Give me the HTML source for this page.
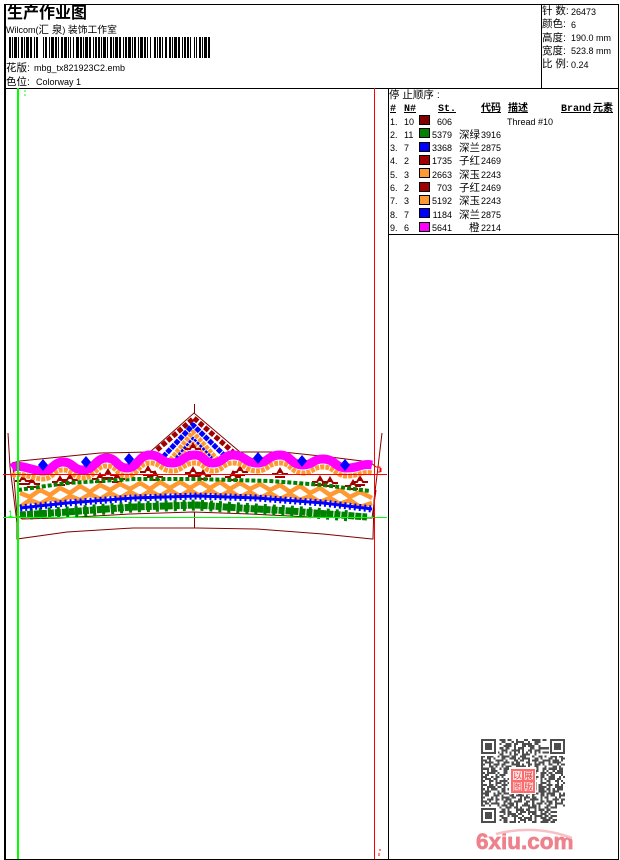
<!DOCTYPE html>
<html><head><meta charset="utf-8"><style>
html,body{margin:0;padding:0;background:#fff;width:620px;height:860px;overflow:hidden}
svg{display:block;font-family:"Liberation Sans","WenQuanYi Zen Hei","Noto Sans CJK SC",sans-serif;font-size:9px;fill:#000}
.k{font-size:10.5px}
.m{font-family:"Liberation Mono","Noto Sans CJK SC",monospace;font-weight:bold;text-decoration:underline;font-size:10px}
.r{text-anchor:end}
.o{fill:none;stroke:#800000;stroke-width:1}
.c{fill:none;stroke-linejoin:round}
</style></head><body>
<svg width="620" height="860" viewBox="0 0 620 860" xmlns="http://www.w3.org/2000/svg">
<defs>
<path id="mf" d="M-8 5H-3L0 0L3 5H8M-5 8H5M-1 3H1" fill="none" stroke="#a00000" stroke-width="2"/>
<path id="dm" d="M0-6L5 0L0 6L-5 0Z" fill="#0000ff"/>
<path id="wave" d="M12 468C20 463 32 471 43 471C53 471 53 462 63 462C73 462 73 470 83 470C95 470 95 458 107 458C117 458 117 468 127 468C138 468 138 455 150 455C161 455 161 463 172 463C183 463 183 455 195 455C204 455 204 463 213 463C223 463 223 455 233 455C245 455 245 463 257 463C268 463 268 455 280 455C291 455 291 465 303 465C313 465 313 459 323 459C335 459 335 468 347 468C359 468 362 463 372 465"/>
<filter id="bl" x="-5%" y="-5%" width="110%" height="110%"><feGaussianBlur stdDeviation=".35"/></filter>
</defs>

<!-- frame -->
<g shape-rendering="crispEdges" stroke="#000" fill="none">
<path d="M4.5 4.5H618.5V859.5H4.5Z"/>
<path d="M5.5 4V860"/>
<path d="M4 88.5H619M541.5 4V88M388.5 88V859M388 234.5H619"/>
</g>

<!-- header text -->
<text x="7" y="18" style="font-size:16px;font-weight:bold">生产作业图</text>
<text x="6" y="33">Wilcom(<tspan class="k">汇 泉</tspan>) <tspan class="k" style="font-size:9.8px">装饰工作室</tspan></text>
<text x="6" y="71" class="k">花版:</text><text x="34" y="71">mbg_tx821923C2.emb</text>
<text x="6" y="85" class="k">色位:</text><text x="36" y="85">Colorway 1</text>

<!-- barcode -->
<path d="M9 47.5H212" fill="none" stroke="#000" stroke-width="21" shape-rendering="crispEdges" stroke-dasharray="2 1 1 1 3 1 1 2 2 1 1 1 3 1 2 2 1 1 2 1 3 1 1 1 2 2 1 1 3 1 2 1 1 2 2 1 3 1 1 1 2 1 1 2 3 1 2 1 1 1 3 1 2 2 1 1 2 1"/>
<g fill="#fff" shape-rendering="crispEdges">
<rect x="39" y="36" width="3" height="23"/><rect x="71" y="36" width="2" height="23"/><rect x="151" y="36" width="3" height="23"/><rect x="167" y="36" width="2" height="23"/><rect x="191" y="36" width="3" height="23"/>
</g>

<!-- stats -->
<text x="542" y="14" class="k">针 数:</text><text x="571" y="15">26473</text>
<text x="542" y="27" class="k">颜色:</text><text x="571" y="28">6</text>
<text x="542" y="41" class="k">高度:</text><text x="571" y="41">190.0 mm</text>
<text x="542" y="54" class="k">宽度:</text><text x="571" y="54">523.8 mm</text>
<text x="542" y="67" class="k">比 例:</text><text x="571" y="68">0.24</text>

<!-- thread table -->
<text x="389" y="98" class="k">停 止顺序 :</text>
<text x="390" y="111" class="m">#</text><text x="404" y="111" class="m">N#</text><text x="438" y="111" class="m">St.</text>
<text x="481" y="111" class="m">代码</text><text x="508" y="111" class="m">描述</text><text x="561" y="111" class="m">Brand</text><text x="593" y="111" class="m">元素</text>

<g stroke="#000" stroke-width="1" shape-rendering="crispEdges">
<rect x="419.5" y="115.5" width="10" height="9" fill="#800000"/>
<rect x="419.5" y="128.5" width="10" height="9" fill="#008000"/>
<rect x="419.5" y="142.5" width="10" height="9" fill="#0000ff"/>
<rect x="419.5" y="155.5" width="10" height="9" fill="#a00000"/>
<rect x="419.5" y="168.5" width="10" height="9" fill="#ff9933"/>
<rect x="419.5" y="182.5" width="10" height="9" fill="#a00000"/>
<rect x="419.5" y="195.5" width="10" height="9" fill="#ff9933"/>
<rect x="419.5" y="208.5" width="10" height="9" fill="#0000ff"/>
<rect x="419.5" y="222.5" width="10" height="9" fill="#ff00ff"/>
</g>

<text x="390" y="125">1.</text><text x="404" y="125">10</text><text x="452" y="125" class="r">606</text><text x="507" y="125">Thread #10</text>
<text x="390" y="138">2.</text><text x="404" y="138">11</text><text x="452" y="138" class="r">5379</text><text x="459" y="138" class="k">深绿</text><text x="481" y="138">3916</text>
<text x="390" y="151">3.</text><text x="404" y="151">7</text><text x="452" y="151" class="r">3368</text><text x="459" y="151" class="k">深兰</text><text x="481" y="151">2875</text>
<text x="390" y="164">4.</text><text x="404" y="164">2</text><text x="452" y="164" class="r">1735</text><text x="459" y="164" class="k">子红</text><text x="481" y="164">2469</text>
<text x="390" y="178">5.</text><text x="404" y="178">3</text><text x="452" y="178" class="r">2663</text><text x="459" y="178" class="k">深玉</text><text x="481" y="178">2243</text>
<text x="390" y="191">6.</text><text x="404" y="191">2</text><text x="452" y="191" class="r">703</text><text x="459" y="191" class="k">子红</text><text x="481" y="191">2469</text>
<text x="390" y="204">7.</text><text x="404" y="204">3</text><text x="452" y="204" class="r">5192</text><text x="459" y="204" class="k">深玉</text><text x="481" y="204">2243</text>
<text x="390" y="218">8.</text><text x="404" y="218">7</text><text x="452" y="218" class="r">1184</text><text x="459" y="218" class="k">深兰</text><text x="481" y="218">2875</text>
<text x="390" y="231">9.</text><text x="404" y="231">6</text><text x="452" y="231" class="r">5641</text><text x="469" y="231" class="k">橙</text><text x="481" y="231">2214</text>

<!-- embroidery outlines -->
<path class="o" d="M8 433L10 467L17 523L17 539L67 532L133 528L197 528L257 529L323 534L372 539L373 539L374 500L378 467L382 433"/>
<path class="o" d="M12 463L20 461L60 457L100 453L150 452L194 413L240 452L283 452L330 457L370 462L376 467"/>
<path class="o" d="M13 467L17 515L22 519L60 518L130 514L193 512L250 514L310 517L372 518L376 490"/>
<path class="o" d="M194.5 404V413M194.5 512V528"/>

<!-- motifs -->
<use href="#mf" x="23" y="476"/><use href="#mf" x="32" y="479"/><use href="#mf" x="60" y="477"/><use href="#mf" x="70" y="475"/><use href="#mf" x="100" y="474"/><use href="#mf" x="108" y="470"/><use href="#mf" x="117" y="474"/><use href="#mf" x="148" y="467"/><use href="#mf" x="155" y="472"/><use href="#mf" x="193" y="468"/><use href="#mf" x="203" y="471"/><use href="#mf" x="233" y="472"/><use href="#mf" x="240" y="467"/><use href="#mf" x="280" y="469"/><use href="#mf" x="320" y="477"/><use href="#mf" x="330" y="478"/><use href="#mf" x="360" y="477"/><use href="#mf" x="353" y="481"/>

<!-- peak -->
<path class="c" d="M157 450L194 418L233 452" stroke="#a00000" stroke-width="5" stroke-dasharray="5 2"/>
<path class="c" d="M163 457L193 425L226 457" stroke="#0000ff" stroke-width="5" stroke-dasharray="5 1"/>
<path class="c" d="M170 460L193 432L218 460" stroke="#ff9933" stroke-width="4.5" stroke-dasharray="4 1"/>
<path class="c" d="M176 458L193 438L212 458" stroke="#0000ff" stroke-width="2.5" stroke-dasharray="3 1"/>
<path class="c" d="M181 456L193 443L207 456" stroke="#ff9933" stroke-width="3" stroke-dasharray="3 1"/>
<use href="#mf" x="193" y="444"/>

<!-- chain -->
<polyline class="c" stroke="#ff9933" stroke-width="4.5" points="20,493 30,497 40,490 50,495 60,488 70,493 80,486 90,492 100,485 110,490 120,484 130,489 140,483 150,489 160,482 170,488 180,482 190,488 200,482 210,488 220,482 230,489 240,483 250,489 260,484 270,490 280,485 290,492 300,486 310,493 320,488 330,495 340,490 350,497 360,492 372,498"/>
<polyline class="c" stroke="#ff9933" stroke-width="4.5" points="20,507 30,500 40,504 50,498 60,502 70,496 80,500 90,494 100,499 110,493 120,498 130,492 140,497 150,491 160,496 170,490 180,496 190,490 200,496 210,490 220,496 230,491 240,497 250,492 260,498 270,493 280,499 290,494 300,500 310,496 320,502 330,498 340,504 350,500 360,507 372,503"/>

<!-- lines -->
<polyline class="c" stroke="#008000" stroke-width="4" stroke-dasharray="4 2" points="18,490 67,483 133,479 197,479 270,481 323,485 370,491" style="stroke-linecap:butt"/>
<polyline class="c" stroke="#008000" stroke-width="7" stroke-dasharray="6 1" points="20,515 67,512 133,507 197,505 240,508 290,511 367,517"/>
<polyline class="c" stroke="#008000" stroke-width="11" stroke-dasharray="3 6" points="30,514 67,512 133,507 197,505 240,508 290,511 350,516"/>
<polyline class="c" stroke="#0000ff" stroke-width="3" points="20,508 67,503 133,498 197,496 257,498 323,503 372,509"/>
<polyline class="c" stroke="#0000ff" stroke-width="7" stroke-dasharray="2 3" points="20,508 67,503 133,498 197,496 257,498 323,503 372,509"/>

<!-- orange and magenta waves -->
<use href="#wave" class="c" stroke="#ff9933" stroke-width="5" stroke-dasharray="4 1" transform="translate(0,8)"/>
<use href="#wave" class="c" stroke="#ff00ff" stroke-width="9"/>

<!-- diamonds -->
<use href="#dm" x="43" y="465"/><use href="#dm" x="86" y="462"/><use href="#dm" x="129" y="459"/><use href="#dm" x="258" y="458"/><use href="#dm" x="302" y="461"/><use href="#dm" x="345" y="465"/>

<!-- guides -->
<g shape-rendering="crispEdges" fill="none">
<path d="M18 88V859" stroke="#00ff00" stroke-width="2"/>
<path d="M3 517.5H387" stroke="#00ff00"/>
<path d="M374.5 88V859" stroke="#ff0000"/>
<path d="M3 474.5H387" stroke="#ff0000"/>
<path d="M25 90v2M25 94v2" stroke="#00ff00"/>
<path d="M380 849v2M379 853v3" stroke="#ff0000"/>
<path d="M376 467h4v5h-3M381 468v4" stroke="#ff0000"/>
</g>
<text x="8" y="517" style="font-size:9px" fill="#00ff00">1</text>

<!-- QR -->
<g filter="url(#bl)">
<g transform="translate(481,739) scale(2.05)" fill="none" stroke="#4d4d4d" stroke-width="1" shape-rendering="crispEdges">
<path d="M0 .5h41" stroke-dasharray="0 9 3 1 2 2 1 3 2 2 4 1 2 1"/>
<path d="M0 1.5h41" stroke-dasharray="0 10 2 3 1 1 4 2 1 2 3 1"/>
<path d="M0 2.5h41" stroke-dasharray="0 9 1 2 3 1 2 2 5 1 2 3"/>
<path d="M0 3.5h41" stroke-dasharray="0 11 4 1 1 3 2 1 3 2 1 1"/>
<path d="M0 4.5h41" stroke-dasharray="0 9 2 1 2 2 1 1 3 3 2 2 1"/>
<path d="M0 5.5h41" stroke-dasharray="0 10 3 2 4 1 1 2 2 1 3 1"/>
<path d="M0 6.5h41" stroke-dasharray="0 8 1 1 1 1 1 1 1 1 1 1 1 1 1 1 1 1 1 1 1 1 1 1 1"/>
<path d="M0 7.5h41" stroke-dasharray="0 9 2 3 1 1 2 2 4 2 1 1"/>
<path d="M0 8.5h41" stroke-dasharray="2 1 3 2 1 1 4 1 2 2 3 3 1 2 2 1 1 2 3 1"/>
<path d="M0 9.5h41" stroke-dasharray="1 2 2 1 1 3 2 2 3 1 1 1 4 2 2 1 1 3 2 1"/>
<path d="M0 10.5h41" stroke-dasharray="3 1 1 2 4 1 1 3 2 1 2 2 1 1 3 2 4 1"/>
<path d="M0 11.5h41" stroke-dasharray="1 1 4 2 1 2 3 1 1 1 2 3 2 2 1 1 3 2"/>
<path d="M0 12.5h41" stroke-dasharray="2 2 1 1 3 1 2 3 4 1 1 2 2 1 3 1 1 2"/>
<path d="M0 13.5h41" stroke-dasharray="1 3 2 1 1 2 1 1 3 2 5 1 1 2 2 3"/>
<path d="M0 14.5h41" stroke-dasharray="4 1 2 2 1 1 3 1 2 3 1 1 3 2 1 2 2 1"/>
<path d="M0 15.5h41" stroke-dasharray="1 2 1 1 3 3 2 1 1 2 4 1 2 1 3 2 1 1"/>
<path d="M0 16.5h41" stroke-dasharray="2 1 4 1 1 2 2 2 1 1 3 3 1 1 2 2 3 1"/>
<path d="M0 17.5h41" stroke-dasharray="1 1 2 3 1 1 3 2 2 1 1 2 4 1 1 3 2 1"/>
<path d="M0 18.5h41" stroke-dasharray="3 2 1 1 2 1 1 3 4 1 2 1 1 2 3 1 2 2"/>
<path d="M0 19.5h41" stroke-dasharray="1 1 3 1 2 3 1 1 2 2 1 1 3 1 4 2 1 1"/>
<path d="M0 20.5h41" stroke-dasharray="2 2 2 1 1 1 4 2 1 1 3 2 2 1 1 3 1 2"/>
<path d="M0 21.5h41" stroke-dasharray="1 3 1 2 3 1 1 1 2 3 1 1 4 1 2 2 3 1"/>
<path d="M0 22.5h41" stroke-dasharray="3 1 2 1 1 2 3 2 1 1 2 1 3 3 1 1 2 2"/>
<path d="M0 23.5h41" stroke-dasharray="1 2 4 1 2 1 1 3 2 2 1 2 3 1 1 1 4 1"/>
<path d="M0 24.5h41" stroke-dasharray="2 1 1 1 3 2 2 1 1 3 4 1 1 2 2 1 3 1"/>
<path d="M0 25.5h41" stroke-dasharray="1 1 3 3 1 1 2 2 3 1 1 1 2 3 1 2 4 1"/>
<path d="M0 26.5h41" stroke-dasharray="4 2 1 1 2 1 3 1 1 2 2 3 1 1 3 1 2 1"/>
<path d="M0 27.5h41" stroke-dasharray="1 1 2 2 3 1 1 3 2 1 4 1 1 2 1 3 2 1"/>
<path d="M0 28.5h41" stroke-dasharray="2 3 1 1 1 2 4 1 2 2 1 1 3 1 2 2 1 1"/>
<path d="M0 29.5h41" stroke-dasharray="1 2 3 1 2 1 1 1 3 3 2 1 1 2 4 1 1 2"/>
<path d="M0 30.5h41" stroke-dasharray="3 1 1 2 1 3 2 1 1 1 4 2 2 1 1 3 2 1"/>
<path d="M0 31.5h41" stroke-dasharray="1 1 2 1 4 2 1 1 3 1 1 3 2 2 1 1 3 1"/>
<path d="M0 32.5h41" stroke-dasharray="2 2 1 3 1 1 3 1 2 1 1 2 4 1 2 1 1 3"/>
<path d="M0 33.5h41" stroke-dasharray="0 9 1 2 3 1 2 1 1 3 4 1 1 2 2 1 3 1"/>
<path d="M0 34.5h41" stroke-dasharray="0 10 2 1 1 3 4 1 2 2 1 1 3 1 2 2"/>
<path d="M0 35.5h41" stroke-dasharray="0 9 3 1 2 2 1 1 3 1 4 2 1 1 2 1 3 1"/>
<path d="M0 36.5h41" stroke-dasharray="0 11 1 1 4 1 2 3 1 1 2 2 3 1 1 2"/>
<path d="M0 37.5h41" stroke-dasharray="0 9 2 2 1 1 3 2 1 3 1 1 4 1 2 1 3 1"/>
<path d="M0 38.5h41" stroke-dasharray="0 10 3 3 1 1 2 1 4 1 1 2 3 1 2 1"/>
<path d="M0 39.5h41" stroke-dasharray="0 9 1 1 2 3 1 2 3 1 2 1 1 3 4 1 2 1"/>
<path d="M0 40.5h41" stroke-dasharray="0 11 2 1 3 1 1 2 1 3 2 2 4 1 2 1"/>
</g>
<g>
<rect x="481" y="739" width="17" height="17" fill="#fff"/><rect x="549" y="739" width="17" height="17" fill="#fff"/><rect x="481" y="807" width="17" height="17" fill="#fff"/>
<path fill="#4d4d4d" fill-rule="evenodd" d="M481 739h15v15h-15zM483 741v11h11v-11zM485 743h7v7h-7zM550 739h15v15h-15zM552 741v11h11v-11zM554 743h7v7h-7zM481 808h15v15h-15zM483 810v11h11v-11zM485 812h7v7h-7z"/>
</g>
</g>
<rect x="509" y="767" width="27" height="27" fill="#fff"/>
<rect x="511" y="769" width="24" height="24" fill="#ff6b6b"/>
<g fill="#ffe0e0"><rect x="513" y="771" width="9" height="9"/><rect x="524" y="771" width="9" height="9"/><rect x="513" y="782" width="9" height="9"/><rect x="524" y="782" width="9" height="9"/></g>
<g fill="#e84040" style="font-size:9px"><text x="513" y="779">以</text><text x="524" y="779">展</text><text x="513" y="790">图</text><text x="524" y="790">版</text></g>

<!-- logo -->
<text x="476" y="849" style="font-size:22.5px;font-weight:bold" fill="#ee828c" stroke="#ee828c" stroke-width=".7">6xiu.com</text>
<path d="M496 834Q535 824 572 838" fill="none" stroke="#f8c0c4" stroke-width="2.5"/>
</svg>
</body></html>
